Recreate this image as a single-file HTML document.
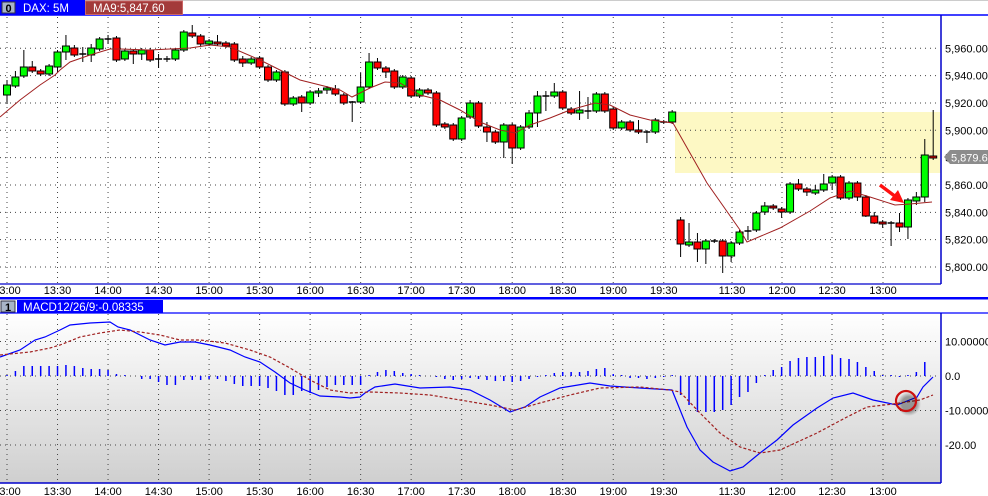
<!DOCTYPE html>
<html><head><meta charset="utf-8"><style>
html,body{margin:0;padding:0;background:#fff;width:988px;height:496px;overflow:hidden}
svg{display:block;font-family:"Liberation Sans",sans-serif}
</style></head><body>
<svg id="s" width="988" height="496" viewBox="0 0 988 496" xmlns="http://www.w3.org/2000/svg">
<defs>
<linearGradient id="gr" x1="0" y1="0" x2="0" y2="1"><stop offset="0" stop-color="#ffffff"/><stop offset="1" stop-color="#cfcfcf"/></linearGradient>
<radialGradient id="sh" cx="0.5" cy="0.5" r="0.5"><stop offset="0.6" stop-color="#000" stop-opacity="0.35"/><stop offset="1" stop-color="#000" stop-opacity="0"/></radialGradient>
</defs>
<rect x="0" y="0" width="988" height="496" fill="#fff"/>
<rect x="0" y="313" width="941" height="170" fill="url(#gr)"/>
<rect x="675" y="112" width="266" height="61" fill="#fdf8c4"/>
<g id="grid"></g>
<g id="hist"></g>
<g id="cand"></g>
<g id="lines"></g>
<!-- headers -->
<rect x="0" y="0" width="988" height="15" fill="#fff"/>
<line x1="0" y1="15" x2="988" y2="15" stroke="#0000ff" stroke-width="1.5"/>
<line x1="0" y1="0.5" x2="988" y2="0.5" stroke="#ccc"/>
<rect x="0" y="0" width="85" height="15" fill="#0000ff"/>
<rect x="2" y="2" width="13" height="11" fill="#a8b4c8" stroke="#334" stroke-width="1"/>
<text x="8.5" y="12" font-size="11" font-weight="bold" text-anchor="middle" fill="#000">0</text>
<text x="23" y="12" font-size="11.5" fill="#fff">DAX: 5M</text>
<rect x="85.5" y="1" width="97" height="13.5" fill="#a33a3a" stroke="#c66" stroke-width="1"/>
<text x="93" y="12" font-size="11.5" fill="#fff">MA9:5,847.60</text>
<line x1="941" y1="15" x2="941" y2="284" stroke="#0000cc" stroke-width="1.5"/>
<line x1="0" y1="284" x2="941" y2="284" stroke="#0000cc" stroke-width="1.2"/>
<rect x="0" y="297" width="988" height="2.5" fill="#0000ff"/>
<rect x="0" y="300" width="988" height="13" fill="#fff"/>
<line x1="0" y1="313" x2="988" y2="313" stroke="#0000ff" stroke-width="1.2"/>
<rect x="1" y="301" width="14" height="11" fill="#a8b4c8" stroke="#334"/>
<text x="8" y="311" font-size="11" font-weight="bold" text-anchor="middle">1</text>
<rect x="17" y="300" width="146" height="13" fill="#0000ff"/>
<text x="23" y="311" font-size="11.5" fill="#fff">MACD12/26/9:-0.08335</text>
<line x1="941" y1="313" x2="941" y2="483" stroke="#0000cc" stroke-width="1.5"/>
<line x1="0" y1="483" x2="941" y2="483" stroke="#0000cc" stroke-width="1.5"/>
<g id="labels" font-size="11" fill="#000"></g>
<!-- price tag -->
<path d="M944 157 L950 150 L988 150 L988 164 L950 164 Z" fill="#8c8c8c"/>
<text x="951" y="161.5" font-size="11" fill="#fff">5,879.62</text>
<!-- arrow -->
<line x1="880" y1="185" x2="896" y2="197" stroke="#ff1010" stroke-width="3.5"/>
<path d="M904 203 L890 200 L898 190 Z" fill="#ff1010"/>
<!-- circle -->
<circle cx="909" cy="404" r="12" fill="url(#sh)"/>
<circle cx="906" cy="401" r="10" fill="none" stroke="#cc1010" stroke-width="2.2"/>
</svg>
<script>
var NS="http://www.w3.org/2000/svg";
function el(p,t,a){var e=document.createElementNS(NS,t);for(var k in a)e.setAttribute(k,a[k]);document.getElementById(p).appendChild(e);return e;}
function X(i){return 7+8.42*i;}
var C=[["g",85,95,80,104],["g",77,86,71,88],["g",67,76,50,78],["r",67,71,61,73],["r",71,74,69,76],["g",66,74,64,76],["g",52,67,50,72],["g",46,52,35,60],["r",48,55,45,57],["d",54,54,47,62],["g",48,55,44,62],["g",39,49,37,51],["d",39,39,35,44],["r",38,60,36,62],["g",51,59,49,61],["r",51,54,49,64],["g",50,54,48,60],["r",50,60,48,62],["d",59,59,54,68],["d",59,59,56,62],["g",50,59,48,61],["g",32,50,30,52],["r",33,36,25,38],["r",36,44,34,46],["g",41,44,39,46],["r",42,44,35,46],["r",43,46,41,48],["r",44,60,42,62],["r",59,63,56,67],["g",59,63,57,65],["r",58,67,56,69],["r",67,80,65,82],["g",72,80,70,82],["r",72,104,70,106],["g",98,104,96,106],["r",97,103,95,112],["g",92,103,90,105],["g",91,93,88,97],["g",88,90,86,94],["r",89,94,85,96],["r",95,103,93,105],["d",102,102,101,122],["g",87,102,73,104],["g",62,87,53,89],["r",62,68,58,70],["r",68,72,66,78],["r",71,87,69,89],["g",77,87,75,89],["r",78,96,76,98],["g",90,96,88,98],["r",90,93,88,95],["r",93,125,91,127],["r",124,127,122,129],["r",125,139,123,141],["g",118,139,116,141],["g",103,117,100,119],["r",103,126,101,128],["r",127,132,122,142],["r",132,142,130,144],["g",125,142,123,158],["r",125,148,123,164],["g",127,148,125,150],["g",113,127,110,129],["g",96,113,91,127],["d",96,96,91,111],["g",92,96,83,98],["r",92,108,90,110],["r",109,113,107,115],["g",110,113,91,120],["d",111,111,97,119],["g",94,111,92,113],["r",94,111,92,113],["r",109,128,107,130],["g",122,128,120,130],["r",122,130,120,132],["r",130,132,120,134],["d",132,132,130,143],["g",120,132,118,134],["d",122,122,120,124],["g",112,122,110,124],
["r",220,244,217,257],["g",242,245,223,247],["r",242,249,233,262],["g",241,249,239,264],["d",241,241,239,243],["r",241,256,239,273],["g",243,256,241,262],["g",232,243,230,245],["d",231,231,226,240],["g",213,230,211,232],["g",206,212,202,215],["r",206,208,204,210],["r",209,212,207,218],["g",184,212,182,214],["r",184,189,179,191],["r",189,192,187,196],["g",190,193,185,195],["g",184,190,174,192],["g",177,183,175,190],["r",177,198,175,200],["g",183,198,181,200],["r",183,197,181,201],["r",197,216,195,217],["r",216,223,212,224],["r",222,223,220,228],["d",223,223,221,246],["r",223,227,213,232],["g",200,227,198,239],["g",197,201,192,205],["g",155,197,139,202],["r",156,158,110,160]];
var H=[1,5,10,10,10,10,10,11,10,8,7,7,6,2,1,0,-3,-3,-6,-9,-9,-4,-4,-4,-3,-3,-5,-8,-10,-10,-10,-12,-15,-19,-19,-15,-17,-14,-11,-9,-9,-9,-9,1,4,6,5,3,2,1,0,-1,-3,-4,-3,-2,-3,-4,-5,-5,-6,-5,-3,-1,1,3,4,4,4,5,7,8,2,1,-2,-2,-3,-2,-1,1,
-19,-29,-36,-36,-36,-34,-29,-21,-16,-7,1,6,9,15,18,19,19,20,21,18,17,14,9,5,1,1,-1,1,4,14,0];
// grid
var TX=[],TL=["13:00","13:30","14:00","14:30","15:00","15:30","16:00","16:30","17:00","17:30","18:00","18:30","19:00","19:30"];
for(var k=0;k<14;k++)TX.push(7+8.42*6*k);
TX.push(732,782,832,883);TL.push("11:30","12:00","12:30","13:00");
var dash={"stroke":"#444","stroke-width":"1","stroke-dasharray":"1,4"};
function line(g,x1,y1,x2,y2,a){var o={x1:x1,y1:y1,x2:x2,y2:y2};for(var k in a)o[k]=a[k];return el(g,"line",o);}
TX.forEach(function(x){line("grid",x,17,x,283,dash);line("grid",x,314,x,482,dash);});
var PY=function(p){return 267-(p-5800)*1.367;};
for(var p=5800;p<=5960;p+=20){var y=PY(p);line("grid",0,y,940,y,dash);
 var t=el("labels","text",{x:945,y:y+4});t.textContent=(p/1000|0)+","+String(p%1000).padStart(3,"0")+".00";}
[[10,"10.00000"],[0,"0.0"],[-10,"-10.0000"],[-20,"-20.00"]].forEach(function(v){var y=376-v[0]*3.45;line("grid",0,y,940,y,dash);var t=el("labels","text",{x:945,y:y+4});t.textContent=v[1];});
TX.forEach(function(x,i){var t=el("labels","text",{x:x,y:294,"text-anchor":"middle"});t.textContent=TL[i];var t2=el("labels","text",{x:x,y:495,"text-anchor":"middle"});t2.textContent=TL[i];});
// hist
H.forEach(function(h,i){if(h==0)return;var x=X(i);line("hist",x,376,x,376-h,{"stroke":"#0000ff","stroke-width":"1.5"});});
// candles
C.forEach(function(c,i){var x=X(i);line("cand",x,c[3],x,c[4],{"stroke":"#000","stroke-width":"1"});
 if(c[0]=="d"){line("cand",x-3.5,c[1],x+3.5,c[1],{"stroke":"#000","stroke-width":"1.5"});}
 else{el("cand","rect",{x:x-3.5,y:c[1],width:7,height:Math.max(2,c[2]-c[1]),fill:c[0]=="g"?"#00ff00":"#ff0000",stroke:"#000","stroke-width":"1"});}});
function pl(pts,a){var o={points:pts,fill:"none"};for(var k in a)o[k]=a[k];el("lines","polyline",o);}
pl("0,117 20,100 40,85 55,75 60,70 70,62 90,55 110,49 120,49 150,50 190,48 210,45 230,47 260,60 280,70 300,80 320,85 340,90 352,97 370,88 385,82 400,83 420,95 440,100 460,110 480,122 500,130 515,133 530,125 550,118 570,110 595,103 610,105 630,115 650,120 673,123 707,183 740,230 747,242 780,228 810,211 830,198 850,191 870,197 895,205 910,204 932,202",{stroke:"#a02020","stroke-width":"1"});
pl("0,357 20,350 35,340 45,337 60,330 70,325 90,323 110,322 118,327 130,330 150,340 165,345 180,342 195,342 210,345 230,350 245,357 260,362 275,372 290,383 305,390 320,396 340,397 350,398 360,397 365,393 375,387 395,384 420,388 450,387 470,390 490,400 510,412 525,407 540,397 560,388 590,383 610,386 640,388 672,390 687,427 700,450 713,462 730,471 743,467 760,453 777,440 793,425 817,408 833,398 853,393 873,400 897,405 917,397 923,387 933,377",{stroke:"#0000ff","stroke-width":"1.2"});
pl("0,355 30,352 50,348 60,345 80,337 100,333 120,330 140,332 160,335 180,340 200,340 225,343 250,350 270,357 290,368 310,380 330,390 350,393 370,392 400,393 430,395 460,400 490,405 515,410 540,403 570,395 600,388 640,387 670,390 680,392 700,413 720,433 740,447 760,453 780,450 817,433 847,417 867,407 893,404 920,400 933,395",{stroke:"#a02020","stroke-width":"1.2","stroke-dasharray":"3,2"});
</script>
</body></html>
